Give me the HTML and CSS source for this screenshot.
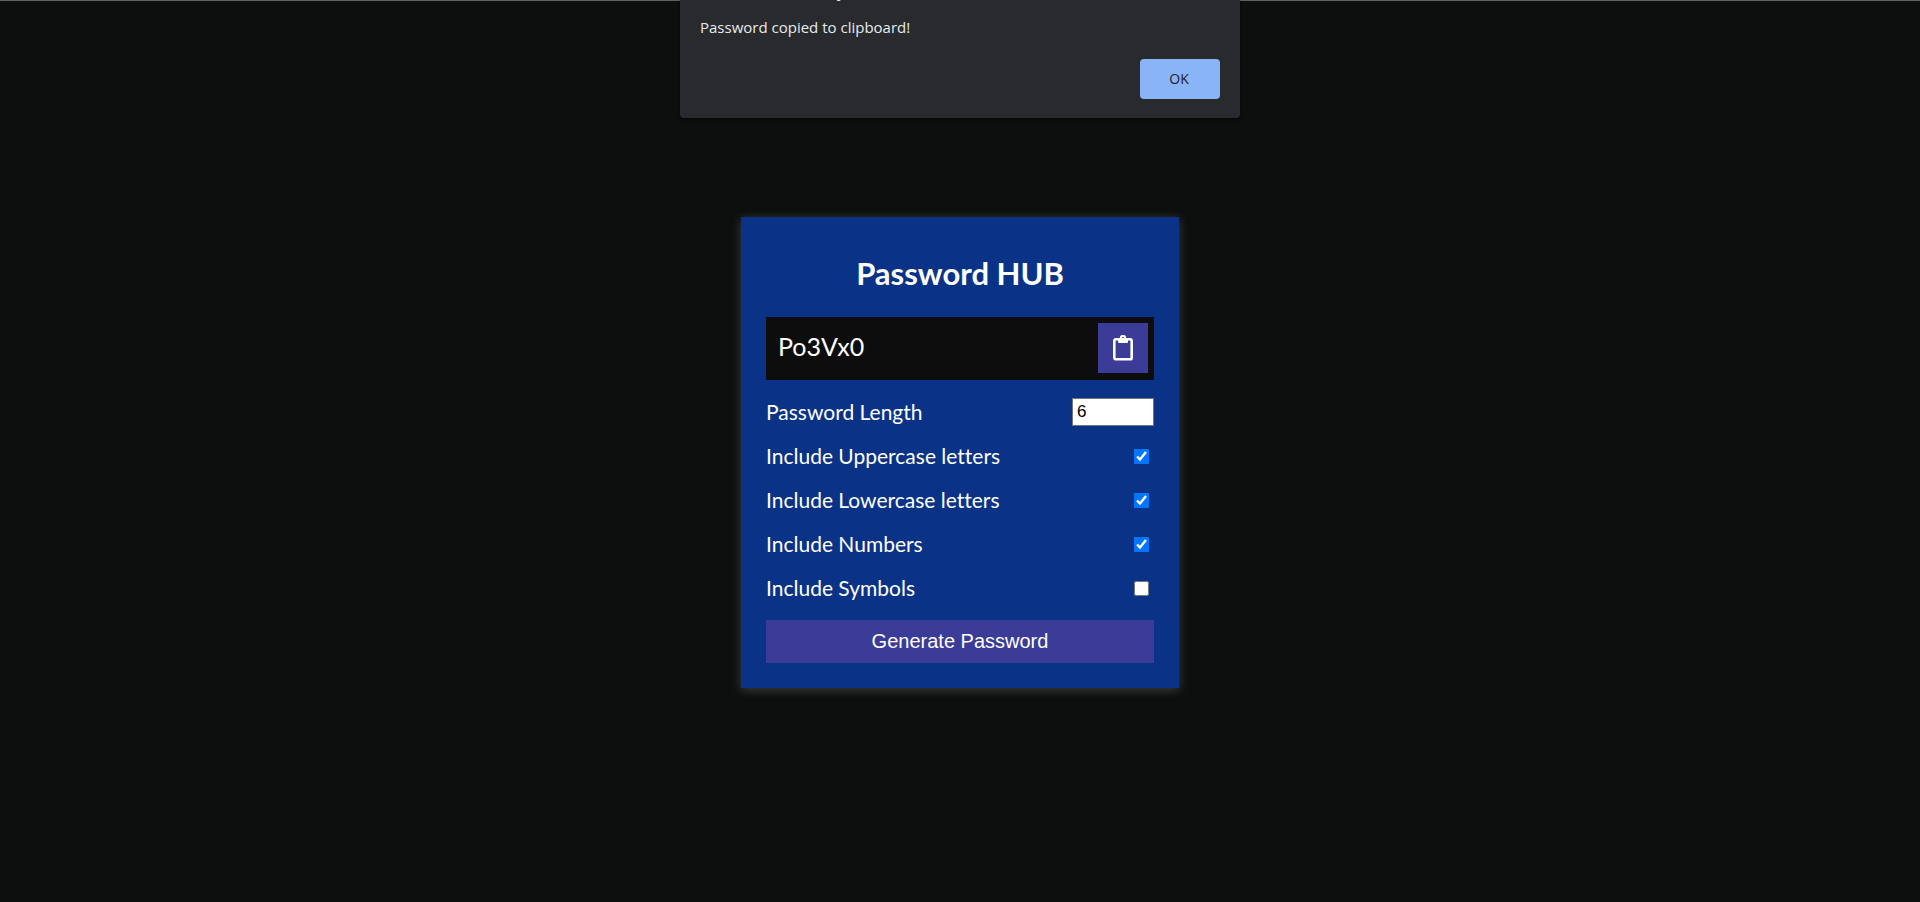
FILE: index.html
```
<!DOCTYPE html>
<html lang="en">
<head>
<meta charset="utf-8">
<meta name="viewport" content="width=device-width, initial-scale=1">
<title>Password HUB</title>
<link rel="stylesheet" href="styles.css">
</head>
<body>
<main class="container">
  <h1 class="title">Password HUB</h1>
  <div class="result">
    <output class="result-text">Po3Vx0</output>
    <button class="copy" type="button" aria-label="Copy password">
      <svg class="copy-icon" viewBox="0 0 20 26" aria-hidden="true">
        <rect x="1.3" y="4.3" width="17.4" height="20" rx="1.6" fill="none" stroke="currentColor" stroke-width="2.6"/>
        <path fill="currentColor" fill-rule="evenodd" d="M5 3h1.8a3.2 3.2 0 0 1 6.4 0H15v4a1 1 0 0 1-1 1H6a1 1 0 0 1-1-1zM10 2a1.1 1.1 0 1 0 0 2.2A1.1 1.1 0 0 0 10 2z"/>
      </svg>
    </button>
  </div>
  <div class="settings">
    <div class="setting">
      <label for="length">Password Length</label>
      <input class="length" type="number" id="length" min="4" max="20" value="6">
    </div>
    <div class="setting">
      <label for="uppercase">Include Uppercase letters</label>
      <input class="check" type="checkbox" id="uppercase" checked>
    </div>
    <div class="setting">
      <label for="lowercase">Include Lowercase letters</label>
      <input class="check" type="checkbox" id="lowercase" checked>
    </div>
    <div class="setting">
      <label for="numbers">Include Numbers</label>
      <input class="check" type="checkbox" id="numbers" checked>
    </div>
    <div class="setting">
      <label for="symbols">Include Symbols</label>
      <input class="check" type="checkbox" id="symbols">
    </div>
  </div>
  <button class="generate" type="button">Generate Password</button>
</main>
<div class="dialog" role="alertdialog" aria-labelledby="origin" aria-describedby="message">
  <p class="origin" id="origin">127.0.0.1:5500 says</p>
  <p class="message" id="message">Password copied to clipboard!</p>
  <button class="ok" type="button">OK</button>
</div>
</body>
</html>
```
FILE: styles.css
```
* {
  box-sizing: border-box;
}

body {
  margin: 0;
  min-height: 100vh;
  display: flex;
  align-items: center;
  justify-content: center;
  padding-top: 2px;
  border-top: 1px solid #5f6368;
  background: #0d0f0e;
  color: #fff;
  font-family: Lato, "Liberation Sans", sans-serif;
  font-variant-ligatures: none;
}

.container {
  width: 438px;
  max-width: 100%;
  padding: 25px;
  background: #0a3387;
  box-shadow: 0 2px 10px rgba(255, 255, 255, 0.2);
}

.title {
  margin: 12px 0 25px;
  font-size: 31px;
  line-height: 38px;
  text-align: center;
}

.result {
  display: flex;
  align-items: center;
  justify-content: space-between;
  padding: 6px 6px 7px 12px;
  background: #0d0d0d;
}

.result-text {
  padding-bottom: 4px;
  font-size: 25px;
  line-height: 32px;
}

.copy {
  display: flex;
  align-items: center;
  justify-content: center;
  width: 50px;
  height: 50px;
  padding: 0;
  border: 0;
  background: #3b3b98;
  color: #fff;
}

.copy-icon {
  width: 20px;
  height: 26px;
}

.settings {
  display: grid;
  gap: 16px;
  padding: 18px 0;
}

.setting {
  display: flex;
  align-items: center;
  justify-content: space-between;
  min-height: 28px;
  font-size: 21px;
  line-height: 28px;
}

.length {
  width: 82px;
  height: 28px;
  padding: 0 4px 1px;
  border: 1px solid #767676;
  background: #fff;
  color: #000;
  font: 17px "Liberation Sans", sans-serif;
}

.check {
  width: 15px;
  height: 15px;
  margin: 0 5px 0 0;
}

.generate {
  display: block;
  width: 100%;
  height: 43px;
  border: 0;
  background: #3b3b98;
  color: #fff;
  font: 20px "Liberation Sans", sans-serif;
}

.dialog {
  position: absolute;
  top: 0;
  left: 50%;
  width: 560px;
  max-width: 100%;
  transform: translateX(-50%);
  display: flex;
  flex-direction: column;
  padding: 0 20px 19px;
  border-radius: 0 0 4px 4px;
  background: #292a2d;
  box-shadow: 0 1px 4px rgba(0, 0, 0, 0.6);
  color: #e8eaed;
  font-family: "Open Sans", "Noto Sans", sans-serif;
}

.origin {
  margin: -21px 0 13px;
  font-size: 17px;
  line-height: 24px;
}

.message {
  margin: 0 0 20px;
  font-size: 15px;
  line-height: 23px;
}

.ok {
  align-self: flex-end;
  width: 80px;
  height: 40px;
  padding: 0 2px 2px 0;
  border: 0;
  border-radius: 4px;
  background: #8ab4f8;
  color: #202124;
  font: 500 14px "Open Sans", "Noto Sans", sans-serif;
}
```
